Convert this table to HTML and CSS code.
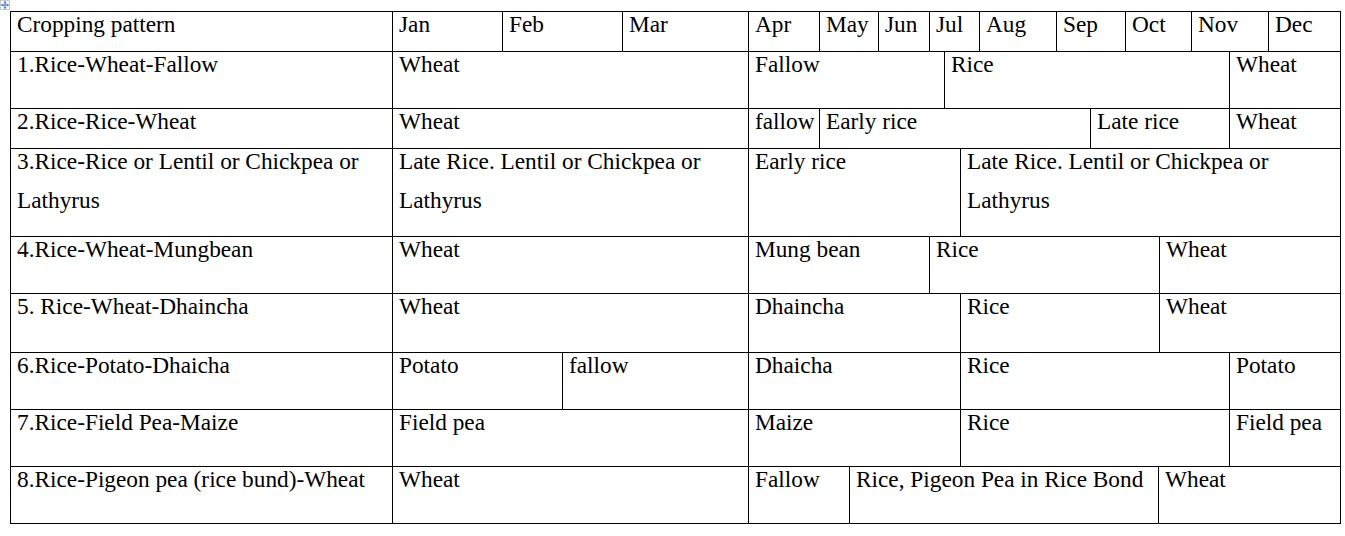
FILE: index.html
```html
<!DOCTYPE html>
<html>
<head>
<meta charset="utf-8">
<link rel="stylesheet" href="styles.css">
</head>
<body>
<div class="page">
  <svg class="move-handle" width="10" height="10" viewBox="0 0 10 10">
    <rect x="0.5" y="0.5" width="9" height="9" fill="#fff" stroke="#c8c8c8"/>
    <path d="M5 1.5 V8.5 M1.5 5 H8.5" stroke="#3c6ad8" stroke-width="1" fill="none"/>
    <path d="M5 1 L3.5 2.8 H6.5 Z M5 9 L3.5 7.2 H6.5 Z M1 5 L2.8 3.5 V6.5 Z M9 5 L7.2 3.5 V6.5 Z" fill="#3c6ad8"/>
  </svg>
  <div class="tbl">
    <div class="row h40">
      <div class="cell w382"><div class="t">Cropping pattern</div></div>
      <div class="cell w110"><div class="t">Jan</div></div>
      <div class="cell w120"><div class="t">Feb</div></div>
      <div class="cell w126"><div class="t">Mar</div></div>
      <div class="cell w71"><div class="t">Apr</div></div>
      <div class="cell w59"><div class="t">May</div></div>
      <div class="cell w51"><div class="t">Jun</div></div>
      <div class="cell w50"><div class="t">Jul</div></div>
      <div class="cell w77"><div class="t">Aug</div></div>
      <div class="cell w69"><div class="t">Sep</div></div>
      <div class="cell w66"><div class="t">Oct</div></div>
      <div class="cell w77"><div class="t">Nov</div></div>
      <div class="cell w72"><div class="t">Dec</div></div>
    </div>
    <div class="row h57">
      <div class="cell w382"><div class="t">1.Rice-Wheat-Fallow</div></div>
      <div class="cell w356"><div class="t">Wheat</div></div>
      <div class="cell w196"><div class="t">Fallow</div></div>
      <div class="cell w285"><div class="t">Rice</div></div>
      <div class="cell w111"><div class="t">Wheat</div></div>
    </div>
    <div class="row h40">
      <div class="cell w382"><div class="t">2.Rice-Rice-Wheat</div></div>
      <div class="cell w356"><div class="t">Wheat</div></div>
      <div class="cell w71"><div class="t">fallow</div></div>
      <div class="cell w271"><div class="t">Early rice</div></div>
      <div class="cell w139"><div class="t">Late rice</div></div>
      <div class="cell w111"><div class="t">Wheat</div></div>
    </div>
    <div class="row h88">
      <div class="cell w382"><div class="t">3.Rice-Rice or Lentil or Chickpea or Lathyrus</div></div>
      <div class="cell w356"><div class="t">Late Rice. Lentil or Chickpea or Lathyrus</div></div>
      <div class="cell w212"><div class="t">Early rice</div></div>
      <div class="cell w380"><div class="t">Late Rice. Lentil or Chickpea or Lathyrus</div></div>
    </div>
    <div class="row h57">
      <div class="cell w382"><div class="t">4.Rice-Wheat-Mungbean</div></div>
      <div class="cell w356"><div class="t">Wheat</div></div>
      <div class="cell w181"><div class="t">Mung bean</div></div>
      <div class="cell w230"><div class="t">Rice</div></div>
      <div class="cell w181"><div class="t">Wheat</div></div>
    </div>
    <div class="row h59">
      <div class="cell w382"><div class="t">5. Rice-Wheat-Dhaincha</div></div>
      <div class="cell w356"><div class="t">Wheat</div></div>
      <div class="cell w212"><div class="t">Dhaincha</div></div>
      <div class="cell w199"><div class="t">Rice</div></div>
      <div class="cell w181"><div class="t">Wheat</div></div>
    </div>
    <div class="row h57">
      <div class="cell w382"><div class="t">6.Rice-Potato-Dhaicha</div></div>
      <div class="cell w170"><div class="t">Potato</div></div>
      <div class="cell w186"><div class="t">fallow</div></div>
      <div class="cell w212"><div class="t">Dhaicha</div></div>
      <div class="cell w269"><div class="t">Rice</div></div>
      <div class="cell w111"><div class="t">Potato</div></div>
    </div>
    <div class="row h57">
      <div class="cell w382"><div class="t">7.Rice-Field Pea-Maize</div></div>
      <div class="cell w356"><div class="t">Field pea</div></div>
      <div class="cell w212"><div class="t">Maize</div></div>
      <div class="cell w269"><div class="t">Rice</div></div>
      <div class="cell w111"><div class="t">Field pea</div></div>
    </div>
    <div class="row h57">
      <div class="cell w382"><div class="t">8.Rice-Pigeon pea (rice bund)-Wheat</div></div>
      <div class="cell w356"><div class="t">Wheat</div></div>
      <div class="cell w101"><div class="t">Fallow</div></div>
      <div class="cell w309"><div class="t">Rice, Pigeon Pea in Rice Bond</div></div>
      <div class="cell w182"><div class="t">Wheat</div></div>
    </div>
    <svg class="resize-handle" width="8" height="8" viewBox="0 0 8 8">
      <rect x="0.5" y="0.5" width="6" height="6" fill="#fff" stroke="#7a7a7a"/>
    </svg>
  </div>
</div>
</body>
</html>
```

FILE: styles.css
```css
html, body {
  margin: 0;
  padding: 0;
  background: #ffffff;
}

.page {
  position: relative;
  padding: 11px 0 0 10px;
  font-family: "Liberation Serif", "Times New Roman", serif;
  font-size: 23.3px;
  color: #000;
}

.move-handle {
  position: absolute;
  left: 0;
  top: 0;
  display: block;
}

.tbl {
  position: relative;
  width: 1331px;
  box-sizing: border-box;
  border-top: 1px solid #000;
  border-left: 1px solid #000;
}

.resize-handle {
  position: absolute;
  right: -3px;
  bottom: -9px;
  display: block;
}

.row {
  display: flex;
}

.cell {
  box-sizing: border-box;
  border-right: 1px solid #000;
  border-bottom: 1px solid #000;
  padding: 0 4px 0 6px;
  overflow: visible;
  flex: none;
}

.t {
  line-height: 39px;
  margin-top: -7px;
  white-space: normal;
}

.h40 { height: 40px; }
.h57 { height: 57px; }
.h59 { height: 59px; }
.h88 { height: 88px; }

.w50 { width: 50px; }
.w51 { width: 51px; }
.w59 { width: 59px; }
.w66 { width: 66px; }
.w69 { width: 69px; }
.w71 { width: 71px; }
.w72 { width: 72px; }
.w77 { width: 77px; }
.w101 { width: 101px; }
.w110 { width: 110px; }
.w111 { width: 111px; }
.w120 { width: 120px; }
.w126 { width: 126px; }
.w139 { width: 139px; }
.w170 { width: 170px; }
.w181 { width: 181px; }
.w182 { width: 182px; }
.w186 { width: 186px; }
.w196 { width: 196px; }
.w199 { width: 199px; }
.w212 { width: 212px; }
.w230 { width: 230px; }
.w269 { width: 269px; }
.w271 { width: 271px; }
.w285 { width: 285px; }
.w309 { width: 309px; }
.w356 { width: 356px; }
.w380 { width: 380px; }
.w382 { width: 382px; }
```
